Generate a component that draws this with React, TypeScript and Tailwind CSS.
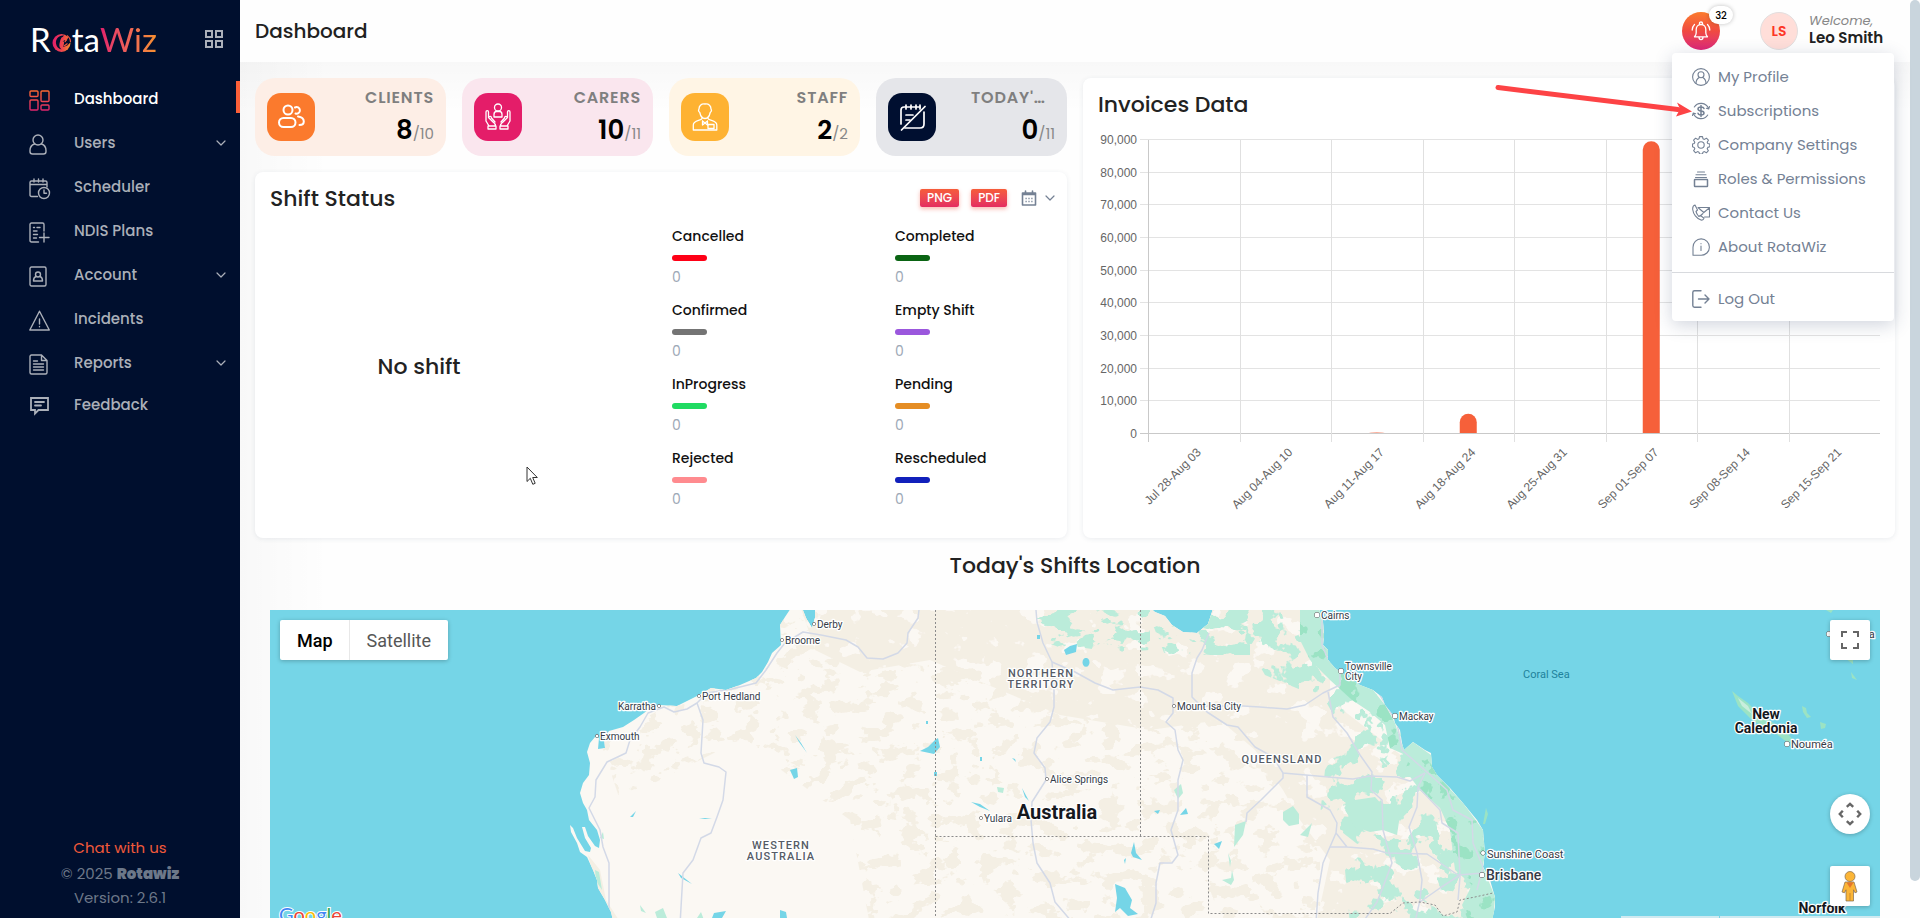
import type { ReactNode } from 'react'
import clsx from 'clsx'

interface IconProps {
  className?: string
  children?: ReactNode
  viewBox?: string
  width?: number
}

function Icon({ className, children, viewBox = '0 0 24 24', width = 1.6 }: IconProps) {
  return (
    <svg
      className={className}
      viewBox={viewBox}
      fill="none"
      stroke="currentColor"
      strokeWidth={width}
      strokeLinecap="round"
      strokeLinejoin="round"
      aria-hidden="true"
    >
      {children}
    </svg>
  )
}

function Chevron({ className }: { className?: string }) {
  return (
    <Icon className={className} viewBox="0 0 10 10" width={1.2}>
      <path d="M1 3l4 4 4-4" />
    </Icon>
  )
}

// Sidebar

interface NavItem {
  label: string
  icon: ReactNode
  expandable?: boolean
}

const NAV_ITEMS: NavItem[] = [
  {
    label: 'Dashboard',
    icon: (
      <g stroke="url(#brand)">
        <defs>
          <linearGradient id="brand" gradientUnits="userSpaceOnUse" x1="0" y1="0" x2="0" y2="21">
            <stop offset="0" stopColor="#fb6a2f" />
            <stop offset="1" stopColor="#e0246f" />
          </linearGradient>
        </defs>
        <rect x="1" y="1" width="8" height="5.5" rx="1" />
        <rect x="1" y="10" width="8" height="10" rx="1" />
        <rect x="12" y="1" width="8" height="10.5" rx="1" />
        <rect x="12" y="15" width="8" height="5" rx="1" />
      </g>
    ),
  },
  {
    label: 'Users',
    expandable: true,
    icon: (
      <>
        <circle cx="9" cy="6" r="5" />
        <path d="M5.5 10C2.500 11 1 13.500 1 16.500v1C1 19 2 20 3.500 20h11c1.500 0 2.500-1 2.500-2.500v-1c0-3-1.500-5.500-4.500-6.500" />
      </>
    ),
  },
  {
    label: 'Scheduler',
    icon: (
      <>
        <path d="M8.500 18.500H2.500c-.8 0-1.500-.6-1.500-1.500V4.500C1 3.600 1.600 3 2.500 3h14c.9 0 1.500.6 1.500 1.500V9M1 6.500h17" />
        <path d="M5 1v3M9.500 1v3M14 1v3" />
        <circle cx="15" cy="15" r="5.500" />
        <path d="M15 12v3.300h2.500" />
      </>
    ),
  },
  {
    label: 'NDIS Plans',
    icon: (
      <>
        <path d="M9.500 20H2.500C1.600 20 1 19.400 1 18.500v-16C1 1.600 1.600 1 2.500 1h11c.9 0 1.500.6 1.500 1.500V9" />
        <path d="M4.500 5.500h1M4.500 9h3.500M4.500 12.500h4M4.500 16h3M8 5.500h3M15 11v9M10.500 15.500H20" />
      </>
    ),
  },
  {
    label: 'Account',
    expandable: true,
    icon: (
      <>
        <rect x="1" y="1" width="16" height="19" rx="1.500" />
        <circle cx="9" cy="8.500" r="2.500" />
        <path d="M7 10.500c-2 .7-2.500 2-2.500 4.500h9c0-2.500-.5-3.800-2.500-4.500" />
      </>
    ),
  },
  {
    label: 'Incidents',
    icon: <path d="M10.500 1.200L20.300 20H.8zM10.500 9v5M10.500 16.500v.3" />,
  },
  {
    label: 'Reports',
    expandable: true,
    icon: (
      <>
        <path d="M12.500 1H2.500C1.600 1 1 1.600 1 2.500v16c0 .9.6 1.500 1.500 1.500h14c.9 0 1.500-.6 1.500-1.500V6.500zM12.500 1v5.500H18" />
        <path d="M4.500 7h4M4.500 10h10M4.500 13h10M4.500 16h10" />
      </>
    ),
  },
  {
    label: 'Feedback',
    icon: (
      <>
        <path d="M2 2h17v12H9.500L6 17.500V14H2z" strokeWidth="1.800" strokeLinejoin="miter" />
        <path d="M6 6h9M6 9.500h6" strokeWidth="1.800" />
      </>
    ),
  },
]

function Logo() {
  return (
    <a href="#home" className="flex items-center font-[Lato,sans-serif] text-[33px] leading-10 text-white">
      R
      <svg className="mt-2 h-5 w-[21px]" viewBox="0 0 20 20" aria-hidden="true">
        <defs>
          <linearGradient id="logo-ring" x1="0" y1="0.500" x2="1" y2="0.600">
            <stop offset="0" stopColor="#e31c6b" />
            <stop offset="0.600" stopColor="#ee4a4a" />
            <stop offset="1" stopColor="#f7902c" />
          </linearGradient>
        </defs>
        <circle cx="10" cy="10" r="9" fill="url(#logo-ring)" />
        <path d="M12.500 2.500C7 2 4 6 4.500 10.500c.5 3 2.500 5.500 5.500 6-2-2-2.500-3.500-2-6L9 6.500z" fill="#000f2e" />
        <path d="M11 8.500l1.800 0-1 5.500 4-1.500 4-4v-3L17 3.500 15 8l-1.500-1z" fill="#000f2e" />
        <circle cx="11" cy="5.500" r="1.300" fill="#ee3f55" />
        <path d="M12.500 13l3.500-2.500M13.500 9l2-4M15.500 2.500A8 8 0 0 1 19 9" stroke="#f0553f" strokeWidth="1.200" fill="none" />
      </svg>
      ta
      <span className="bg-linear-to-r from-[#e31c6b] to-[#f7902c] bg-clip-text text-transparent">Wiz</span>
    </a>
  )
}

function Sidebar() {
  return (
    <aside className="flex w-60 shrink-0 flex-col bg-[#000f2e] text-[#abb0b9]">
      <div className="flex h-[77px] items-center justify-between pr-4 pl-[30px]">
        <Logo />
        <button aria-label="Toggle sidebar">
          <Icon className="h-5 w-5" viewBox="0 0 20 20" width={2}>
            <path d="M2 2h6v6H2zM12 2h6v6h-6zM2 12h6v6H2zM12 12h6v6h-6z" strokeLinejoin="miter" />
          </Icon>
        </button>
      </div>

      <nav className="flex flex-col">
        {NAV_ITEMS.map((item, index) => (
          <a
            key={item.label}
            href="#nav"
            className={clsx(
              'relative flex items-center pr-3.5 pl-7 text-[15px] font-medium',
              index === NAV_ITEMS.length - 1 ? 'h-10' : 'h-11',
              index === 0 && 'text-white',
            )}
          >
            <Icon className="mt-0.5 h-[23px] w-[23px]" viewBox="-1 -1 23 23" width={1.4}>
              {item.icon}
            </Icon>
            <span className="ml-[23px] flex-1">{item.label}</span>
            {item.expandable && <Chevron className="h-2.5 w-2.5" />}
            {index === 0 && <span className="absolute top-1 right-0 h-8 w-1 bg-[#fb5f38]" />}
          </a>
        ))}
      </nav>

      <div className="mt-auto flex flex-col items-center pb-2 text-[15px] leading-6 text-[#6d7889]">
        <a href="#chat" className="mb-0.5 text-[#f1593a]">
          Chat with us
        </a>
        <p>
          © 2025 <b className="font-black">Rotawiz</b>
        </p>
        <p>Version: 2.6.1</p>
      </div>
    </aside>
  )
}

// Header

const MENU_ITEMS: { label: string; icon: ReactNode }[] = [
  {
    label: 'My Profile',
    icon: (
      <>
        <circle cx="9" cy="9" r="8.400" />
        <circle cx="9" cy="6.700" r="3" />
        <path d="M4 15.500c0-3.300 1.300-5 3.300-6M14 15.500c0-3.300-1.300-5-3.300-6" />
      </>
    ),
  },
  {
    label: 'Subscriptions',
    icon: (
      <>
        <path d="M2.300 5A8 8 0 0 1 16.500 6.500M15.700 13A8 8 0 0 1 1.500 11.500M17.500 4.500l-.800 2.500-2.300-.800M.5 13.500L1.300 11l2.300.800" />
        <path d="M12 6.500c-.3-1-1.300-1.500-3-1.500s-3 .700-3 2 1 1.800 3 2 3 .700 3 2-1.200 2-3 2-2.800-.700-3-1.800M9 3.500v11" strokeWidth="1.500" />
      </>
    ),
  },
  {
    label: 'Company Settings',
    icon: (
      <>
        <circle cx="9" cy="9" r="3.200" />
        <path d="M7.500.6h3l.5 2.200 1.400.6 2-1.200 2 2-1.200 2 .6 1.300 2 .5v2.800l-2 .6-.6 1.300 1.200 2-2 2.100-2-1.200-1.400.6-.5 1.800h-3L7 16.200l-1.400-.6-2 1.200-2-2.100 1.200-2-.6-1.300-1.700-.6V8l1.700-.5.600-1.300-1.200-2 2-2 2 1.200L7 2.800z" />
      </>
    ),
  },
  {
    label: 'Roles & Permissions',
    icon: (
      <>
        <path d="M5.500 2h7M4 4.800h10M3.500 7.500h11" />
        <rect x="2.500" y="9.500" width="13" height="7" rx="0.500" strokeWidth="1.500" />
      </>
    ),
  },
  {
    label: 'Contact Us',
    icon: (
      <>
        <path d="M6 3.500h11.500v9.500H12.500M6.500 4l5.300 4.500L17.200 4M8 12l3-2.500" />
        <path d="M3 1C1.200 1.500.5 3 .7 5.500c.5 4.500 3.800 9 8.300 10.500 1.500.4 2.500-.3 3-1.800L8.500 11.500l-1.700 1C5.500 11 4.500 9.500 4 7.500l1.500-1.500z" />
      </>
    ),
  },
  {
    label: 'About RotaWiz',
    icon: (
      <>
        <path d="M1 17.300v-8A8.200 8.200 0 1 1 9 17.300z" />
        <path d="M9 8v4.500M9 5.500v.3" />
      </>
    ),
  },
]

function ProfileMenu() {
  return (
    <div className="absolute top-[53px] right-4 z-20 w-[222px] rounded bg-white pt-[7px] pb-1 text-[15px] text-[#748194] shadow-[0_4px_18px_rgba(40,60,100,0.22)]">
      {MENU_ITEMS.map((item) => (
        <a key={item.label} href="#menu" className="flex h-[34px] items-center pl-5">
          <Icon className="h-[18px] w-[18px]" viewBox="0 0 18 18" width={1.1}>
            {item.icon}
          </Icon>
          <span className="ml-2">{item.label}</span>
        </a>
      ))}
      <hr className="mt-2 mb-2 border-[#d8dade]" />
      <button className="flex h-9 w-full items-center pl-5">
        <Icon className="h-[18px] w-[18px]" viewBox="0 0 18 18" width={1.4}>
          <path d="M9 .8H2.500C1.500.8.8 1.500.8 2.500v13c0 1 .7 1.700 1.700 1.700H9M6.500 9h10.500M13 5l4 4-4 4" />
        </Icon>
        <span className="ml-2">Log Out</span>
      </button>
      <svg className="absolute top-7 -left-[178px] h-10 w-52" viewBox="0 0 208 40" aria-hidden="true">
        <path d="M4 6.500L184 28.500" stroke="#fd4345" strokeWidth="5" strokeLinecap="round" />
        <path d="M198 30.500l-15-9 3 6.500-4 7.500z" fill="#fd4345" />
      </svg>
    </div>
  )
}

function Header() {
  return (
    <header className="relative flex h-[62px] shrink-0 items-center bg-[#fefefe] pr-[27px] pl-[15px]">
      <h1 className="text-[20px] font-medium text-[#212121]">Dashboard</h1>
      <button
        aria-label="Notifications, 32 unread"
        className="relative ml-auto flex h-[38px] w-[38px] items-center justify-center rounded-full bg-linear-to-b from-[#fb7a2c] via-[#f04a40] to-[#dd2477] text-white"
      >
        <Icon className="h-5 w-5" viewBox="0 0 20 20" width={1.3}>
          <path d="M3.500 15.800h13c-1.200-1.200-1.700-2.300-1.700-4V8.500c0-2.800-2-5-4.800-5s-4.800 2.200-4.800 5v3.300c0 1.700-.5 2.800-1.700 4zM8.500 3.500V2.200c0-1.600 3-1.600 3 0v1.300M8 16c0 3.500 4 3.500 4 0M3.500 3.500C2 5 1.200 6.800 1.200 9M16.500 3.500C18 5 18.800 6.800 18.800 9" />
        </Icon>
        <span className="absolute -top-1.5 left-[27px] flex h-[18px] w-6 items-center justify-center rounded-full bg-white text-[10px] font-medium text-black shadow-[0_0_4px_rgba(0,0,0,0.25)]">
          32
        </span>
      </button>
      <button className="ml-10 flex items-center gap-[11px] text-left">
        <span className="flex h-[38px] w-[38px] items-center justify-center rounded-full border border-[#e3dede] bg-[#ffded9] text-sm font-semibold text-[#fd3626]">
          LS
        </span>
        <span className="w-[74px] pb-1 leading-[17px] whitespace-nowrap">
          <i className="block text-[13px] text-[#888]">Welcome,</i>
          <b className="block text-[15px] font-semibold text-[#222]">Leo Smith</b>
        </span>
      </button>
      <ProfileMenu />
    </header>
  )
}

// Stat cards

interface Stat {
  label: string
  value: number
  total: number
  card: string
  tile: string
  icon: ReactNode
}

const STATS: Stat[] = [
  {
    label: 'CLIENTS',
    value: 8,
    total: 10,
    card: 'bg-[#fdeee6]',
    tile: 'bg-[#fb7a2d]',
    icon: (
      <g strokeWidth="2">
        <circle cx="11" cy="7" r="4.500" />
        <rect x="2" y="15" width="16.500" height="9" rx="4.500" />
        <path d="M18 4.500a3.300 3.300 0 1 1 .5 6M21 13.500c3.500.5 5.800 2.500 5.800 5 0 2-1.500 3.500-4.300 3.500" />
      </g>
    ),
  },
  {
    label: 'CARERS',
    value: 10,
    total: 11,
    card: 'bg-[#fae6ee]',
    tile: 'bg-[#e41d69]',
    icon: (
      <g strokeWidth="1.300">
        <circle cx="14" cy="4.500" r="3.500" />
        <path d="M10 14v-2.500c0-2 1-3 2.500-3h3c1.500 0 2.500 1 2.500 3V14z" />
        <path d="M4 26v-3h8v3zM5 23l-3-5V9c0-1.800 2.500-1.800 2.500 0v5.500l4.500 4.500c1.500 1 2.500 2 2.500 4M4.500 14.500c1-2 3-1 3 .5l3.500 4" />
        <path d="M24 26v-3h-8v3zM23 23l3-5V9c0-1.800-2.500-1.800-2.500 0v5.500L19 19c-1.500 1-2.500 2-2.500 4M23.500 14.500c-1-2-3-1-3 .5L17 19" />
      </g>
    ),
  },
  {
    label: 'STAFF',
    value: 2,
    total: 2,
    card: 'bg-[#fff5e5]',
    tile: 'bg-[#feb232]',
    icon: (
      <g strokeWidth="1.300">
        <path d="M14 1C10 .5 8 3 8 6c-.8 1.500 0 3 .8 3.500C9.500 13 11.500 15.500 14 15.500s4.500-2.500 5.200-6C20 9 20.800 7.500 20 6c0-3-2-5.500-6-5z" />
        <path d="M11 15.500C10 18 2.300 17 2.300 22v5h23.500v-5c0-5-7.800-4-8.800-6.500M11.500 18l2.500 2 2.500-2M11.500 18v4l2.500-2 2.500 2v-4" />
        <rect x="17" y="21.500" width="6" height="4" />
      </g>
    ),
  },
  {
    label: "TODAY'S SHIFTS",
    value: 0,
    total: 11,
    card: 'bg-[#e5e6ea]',
    tile: 'bg-[#000f30]',
    icon: (
      <g strokeWidth="1.700">
        <path d="M3 21V7c0-2 1-3 3-3h16M7 25h15c2.500 0 4-1.500 4-4V9" />
        <path d="M8 2v4M13 2v4M18 2v4M22 2v4M8 12h7M8 17h4" />
        <path d="M3.500 27L27 3.500" />
      </g>
    ),
  },
]

function StatCard({ stat }: { stat: Stat }) {
  return (
    <div className={clsx('flex h-[78px] items-center rounded-[20px] px-3', stat.card)}>
      <div className={clsx('flex h-12 w-12 shrink-0 items-center justify-center rounded-[14px] text-white', stat.tile)}>
        <Icon className="h-7 w-7" viewBox="0 0 28 28">
          {stat.icon}
        </Icon>
      </div>
      <div className="ml-auto w-[84px] self-start pt-1.5 text-right">
        <p className="truncate text-[16px] leading-7 font-semibold tracking-wider text-[#7f7f7f]">{stat.label}</p>
        <p className="text-[26px] leading-9 font-semibold text-black">
          {stat.value}
          <span className="text-[15px] font-normal text-[#888]">/{stat.total}</span>
        </p>
      </div>
    </div>
  )
}

// Shift status

const STATUSES = [
  { label: 'Cancelled', color: 'bg-[#fe0016]' },
  { label: 'Completed', color: 'bg-[#0a6413]' },
  { label: 'Confirmed', color: 'bg-[#747474]' },
  { label: 'Empty Shift', color: 'bg-[#9b57dd]' },
  { label: 'InProgress', color: 'bg-[#20db62]' },
  { label: 'Pending', color: 'bg-[#e58d24]' },
  { label: 'Rejected', color: 'bg-[#ff8b8f]' },
  { label: 'Rescheduled', color: 'bg-[#1120bb]' },
]

const exportButton =
  'h-[18px] rounded-xs bg-linear-to-b from-[#f65c39] to-[#e42c60] px-[7px] text-[12px] leading-[18px] font-medium text-white shadow-[0_2px_4px_rgba(240,80,60,0.4)]'

function ShiftStatus() {
  return (
    <section className="flex-1 rounded-lg bg-white pt-2 pr-3 pl-[15px] shadow-[0_1px_5px_rgba(60,80,110,0.1)]">
      <div className="flex h-9 items-center">
        <h2 className="text-[22px] font-medium text-[#222]">Shift Status</h2>
        <button className={clsx(exportButton, 'ml-auto')}>PNG</button>
        <button className={clsx(exportButton, 'ml-3')}>PDF</button>
        <button aria-label="Select period" className="ml-3.5 flex items-center gap-2 text-[#748194]">
          <Icon className="h-4 w-4" viewBox="0 0 16 16" width={1.6}>
            <path d="M1.500 3h13v12h-13zM1.500 4.500h13M4.500 1v2M11.500 1v2" />
            <path d="M4.500 8.500h7M4.500 11.500h7" strokeDasharray="1.200 1.700" strokeLinecap="butt" />
          </Icon>
          <Chevron className="h-2.5 w-2.5" />
        </button>
      </div>
      <div className="mt-2 grid grid-cols-[402fr_383fr]">
        <div className="relative flex items-center justify-center pr-[104px] text-[22px] font-medium text-[#222]">
          No shift
          <svg className="absolute top-[242px] left-64 h-5 w-3" viewBox="0 0 12 20" aria-hidden="true">
            <path
              d="M1 1v14.500l3.300-3.200 2.500 6 2.400-1-2.500-5.800H11.300z"
              fill="#fff"
              stroke="#333"
              strokeLinejoin="round"
            />
          </svg>
        </div>
        <dl className="grid grid-cols-[223fr_160fr] gap-y-[11px]">
          {STATUSES.map((status) => (
            <div key={status.label}>
              <dt className="text-[14px] leading-6 font-medium text-[#111]">{status.label}</dt>
              <dd>
                <span className={clsx('mt-[7px] mb-1.5 block h-1.5 w-[35px] rounded-full', status.color)} />
                <span className="block text-[14px] leading-5 text-[#9da8b6]">0</span>
              </dd>
            </div>
          ))}
        </dl>
      </div>
    </section>
  )
}

// Invoices chart

const INVOICES = [
  { week: 'Jul 28-Aug 03', amount: 0 },
  { week: 'Aug 04-Aug 10', amount: 0 },
  { week: 'Aug 11-Aug 17', amount: 150 },
  { week: 'Aug 18-Aug 24', amount: 5900 },
  { week: 'Aug 25-Aug 31', amount: 0 },
  { week: 'Sep 01-Sep 07', amount: 89300 },
  { week: 'Sep 08-Sep 14', amount: 0 },
  { week: 'Sep 15-Sep 21', amount: 0 },
]

const CHART = { left: 50, right: 782, top: 10, bottom: 304 }

function InvoicesChart() {
  const step = (CHART.right - CHART.left) / INVOICES.length
  const scale = (CHART.bottom - CHART.top) / 90000

  return (
    <svg viewBox="0 0 782 390" className="w-full font-['Liberation_Sans',Arial,sans-serif] text-[12px]">
      {Array.from({ length: 10 }, (_, i) => {
        const y = Math.round(CHART.bottom - i * 10000 * scale) - 0.5
        return (
          <g key={i}>
            <path d={`M${CHART.left - 8} ${y}H${CHART.right}`} stroke={i === 0 ? '#c9c9c9' : '#e3e3e3'} />
            <text x={CHART.left - 11} y={y + 4} textAnchor="end" fill="#666">
              {(i * 10000).toLocaleString('en-US')}
            </text>
          </g>
        )
      })}
      {INVOICES.map((invoice, i) => {
        const x = Math.round(CHART.left + i * step) + 0.5
        const middle = CHART.left + (i + 0.5) * step
        const height = invoice.amount * scale
        const top = CHART.bottom - height
        const radius = Math.min(8.5, height)
        return (
          <g key={invoice.week}>
            <path d={`M${x} ${CHART.top}V${CHART.bottom + 8}`} stroke={i === 0 ? '#c9c9c9' : '#e0e0e0'} />
            {height > 0 && (
              <path
                d={`M${middle - 8.5} ${CHART.bottom - 1}V${top + radius - 1}a8.5 ${radius} 0 0 1 17 0V${CHART.bottom - 1}z`}
                fill="#f6603a"
              />
            )}
            <text
              transform={`translate(${middle + 8} ${CHART.bottom + 19}) rotate(-45)`}
              textAnchor="end"
              fill="#666"
            >
              {invoice.week}
            </text>
          </g>
        )
      })}
    </svg>
  )
}

// Shifts map

const LAND =
  'M793 605L785 617 780 625 781 645 772 653 768 662 762 672 756 678 740 685 726 690 711 688 699 695 685 702 677 706 660 705 652 707 644 713 634 720 623 727 609 731 604 738 605 748 598 749 599 738 595 737 590 743 587 752 590 763 589 775 583 783 580 793 583 803 587 810 589 820 597 830 600 840 599 848 595 846 588 836 585 827 582 827 585 838 591 848 590 852 585 851 577 838 573 828 570 825 571 832 577 843 580 852 587 857 593 870 597 880 598 888 605 900 611 912 614 925 1491 925 1495 907 1495 897 1490 880 1483 867 1485 853 1483 830 1477 820 1463 803 1450 788 1437 775 1432 767 1431 753 1425 750 1413 742 1404 750 1402 743 1400 730 1395 723 1393 715 1385 705 1382 697 1373 690 1360 685 1347 677 1335 668 1328 660 1328 650 1323 645 1324 635 1323 622 1318 605 1214 605 1212 612 1208 624 1197 633 1183 632 1172 625 1165 616 1155 612 1147 605 815 605 815 618 812 628 806 618 801 605z'

const TROPICS =
  'M800 605H1330V700L1420 770 1480 840 1495 925H1316L1330 860 1300 820 1283 790 1255 750 1220 720 1150 730 1060 715 1000 690 930 660 860 672 815 650z'

const GREEN_BELT =
  'M1300 605L1318 605 1323 622 1324 645 1328 660 1347 677 1373 690 1385 705 1395 723 1402 745 1413 742 1431 755 1437 775 1463 803 1483 830 1485 853 1483 867 1495 897 1493 925 1470 925 1462 905 1472 885 1455 870 1450 830 1440 808 1420 790 1405 770 1410 757 1390 748 1385 725 1370 712 1352 700 1330 680 1310 660 1300 640z'

const WOODLAND =
  'M1250 605H1325L1345 680 1400 730 1480 830 1494 925H1350L1345 870 1365 850 1320 815 1325 770 1345 735 1325 700 1265 675 1245 640z'

const ROADS = [
  'M919 610L918 618 908 633 907 643 898 653 883 659 867 658 858 647 846 640 821 635 803 632 785 643 777 653 766 670 756 683 732 689 707 693 697 703 687 709 674 712 664 707 648 713 640 727 630 740 626 753 607 762 596 780 595 797 589 808 600 830 603 847 609 863 609 925',
  'M697 703L703 720 701 753 704 763 719 767 726 772 723 800 717 817 711 833 701 838 693 860 683 873 680 925',
  'M1036 610L1037 622 1043 643 1052 662 1054 690 1054 707 1050 722 1037 738 1034 753 1045 768 1046 780 1032 802 1031 820 1033 843 1037 863 1050 883 1055 902 1072 922',
  'M1052 662L1075 672 1095 683 1113 690 1140 687 1158 690 1173 698 1173 713 1166 722 1175 730 1178 750 1183 760 1178 780 1178 810 1171 830 1178 855 1172 863 1160 863 1156 883 1156 903 1150 922',
  'M1209 633L1202 650 1197 658 1192 673 1192 697 1207 712 1227 725 1238 727 1255 747 1273 757 1283 773 1340 778 1353 779 1370 776 1397 777 1410 781 1425 773',
  'M1173 706L1243 706 1260 707 1287 709 1305 705 1323 693 1340 685 1340 672',
  'M1283 773L1283 778 1261 800 1247 813 1246 822',
  'M1328 692L1333 717 1347 733 1360 755 1372 772 1371 790 1382 800 1383 830 1392 863 1383 887 1377 902 1363 922',
  'M1307 775L1307 797 1330 810 1337 823 1336 833 1323 863 1318 893 1316 922',
  'M1330 847L1347 847 1373 849 1387 853 1427 854 1458 875 1483 873M1336 833L1347 847',
  'M1322 615L1322 645 1327 657 1340 672 1377 690 1397 723 1402 750 1427 772 1447 790 1453 810 1472 820 1473 843 1483 867 1477 890',
  'M1425 773L1418 787 1417 807 1409 827 1417 853 1422 880 1420 900 1415 922',
  'M1418 787L1440 810 1442 823 1458 833 1460 877 1458 900M1460 875L1440 888 1420 902',
]

const LAKES = [
  'M935 740L938 738 940 747 934 754 920 751 928 747z',
  'M1115 884L1125 888 1132 900 1130 908 1138 914 1128 916 1120 908 1115 912 1117 898z',
  'M1064 650L1070 646 1077 644 1076 652 1066 655z',
  'M1085 658a3.500 4.500 0 1 0 2 0z',
  'M1214 844L1222 841 1219 849z',
  'M790 770L797 768 798 777 794 779z',
  'M971 802L980 804 990 811 980 807zM959 796L963 798z',
  'M1022 788L1025 797 1029 801zM1090 764L1099 769zM1066 827L1071 832z',
  'M1134 842L1136 853 1142 860 1133 857 1131 853zM1124 860L1126 858 1125 864z',
  'M678 873L692 884 681 878zM714 913L726 911 722 918H712zM780 910L786 912 787 918H780z',
  'M795 735L801 743 807 753 799 742zM630 817L636 811 633 817zM699 818H712L705 819z',
  'M1037 635h3v4h-3zM934 772h3v4h-3zM980 757h2v4h-2zM1012 758l3 1 1 3zM926 721h2v3h-2z',
  'M1180 815L1186 808 1188 814zM1154 811l6-1-2 4z',
]

const PARKS = [
  'M1174 790L1181 784 1183 793 1178 799z',
  'M997 787l7 1-1 5-5-1z',
  'M1235 825L1246 821 1243 835 1234 847zM1228 853l3 8-1 6zM1222 880l9-2 1-8 2 10-3 5z',
  'M1345 810L1355 800 1375 797 1385 808 1400 815 1397 835 1383 830 1370 832 1355 827z',
  'M1283 812l10-6 6 8v10l-10 2-6-6zM1300 835l12-12-4 14z',
  'M595 870l4 2 3 18-6-9zM600 838l3-6 1 7zM640 905l6 8-5-2z',
  'M655 912l8-4 4 10h-10zM697 918l4-6 3 8zM1083 643l8-1 1 7-7-1z',
]

interface MapLabel {
  text: string
  x: number
  y: number
  end?: boolean
  large?: boolean
  dot?: [number, number, number]
}

const TOWNS: MapLabel[] = [
  { text: 'Derby', x: 817, y: 628, dot: [814, 624, 1.5] },
  { text: 'Broome', x: 785, y: 644, dot: [782, 640, 1.5] },
  { text: 'Port Hedland', x: 702, y: 700, dot: [699, 696, 1.5] },
  { text: 'Karratha', x: 656, y: 710, end: true, dot: [659, 706, 1.5] },
  { text: 'Exmouth', x: 600, y: 740, dot: [597, 736, 1.5] },
  { text: 'Alice Springs', x: 1050, y: 783, dot: [1047, 779, 1.5] },
  { text: 'Yulara', x: 984, y: 822, dot: [981, 818, 1.5] },
  { text: 'Mount Isa City', x: 1177, y: 710, dot: [1174, 706, 1.5] },
  { text: 'Cairns', x: 1321, y: 619, dot: [1317, 615, 2.5] },
  { text: 'Townsville', x: 1345, y: 670, dot: [1341, 671, 2.5] },
  { text: 'City', x: 1345, y: 680 },
  { text: 'Mackay', x: 1399, y: 720, dot: [1395, 716, 2.5] },
  { text: 'Sunshine Coast', x: 1487, y: 858, large: true, dot: [1483, 853, 2] },
  { text: 'Nouméa', x: 1791, y: 748, large: true, dot: [1787, 744, 2.5] },
  { text: 'Port Vila', x: 1833, y: 638, large: true, dot: [1829, 634, 2.5] },
]

function Speckle({ id, seed, freq, color, cut }: { id: string; seed: number; freq: string; color: string; cut: number }) {
  return (
    <filter id={id} x="0" y="0" width="1" height="1" colorInterpolationFilters="sRGB">
      <feTurbulence type="fractalNoise" baseFrequency={freq} numOctaves={4} seed={seed} />
      <feColorMatrix values={`0 0 0 0 0  0 0 0 0 0  0 0 0 0 0  0 0 0 30 ${-30 * cut}`} result="spots" />
      <feFlood floodColor={color} />
      <feComposite operator="in" in2="spots" />
      <feComposite operator="in" in2="SourceAlpha" />
    </filter>
  )
}

function MapCanvas() {
  return (
    <svg viewBox="270 610 1610 308" className="block w-full bg-[#75d5e7] font-[Roboto,sans-serif] text-[10px]">
      <defs>
        <clipPath id="land">
          <path d={LAND} />
        </clipPath>
        <Speckle id="sand" seed={7} freq="0.05 0.07" color="#f4efe4" cut={0.56} />
        <Speckle id="pale" seed={3} freq="0.04 0.05" color="#fbf8f3" cut={0.6} />
        <Speckle id="bush" seed={12} freq="0.05 0.045" color="#bbecda" cut={0.52} />
        <Speckle id="forest" seed={5} freq="0.05" color="#9be3c4" cut={0.58} />
        <Speckle id="north" seed={21} freq="0.04 0.07" color="#bbecda" cut={0.55} />
      </defs>

      <g clipPath="url(#land)">
        <rect x="560" y="605" width="950" height="320" fill="#fbf8f3" />
        <path d="M780 605H1320V925H870L850 820 740 740 620 800 600 740 700 690z" filter="url(#sand)" />
        <path d={TROPICS} fill="#f4efe4" />
        <path d={TROPICS} filter="url(#pale)" />
        <path d="M1030 605H1150V650L1080 655 1040 640z" filter="url(#north)" />
        <path d="M1145 605H1250V655H1165z" filter="url(#north)" />
        <path d={WOODLAND} filter="url(#bush)" />
        <path d={GREEN_BELT} fill="#bbecda" />
        <path d={GREEN_BELT} filter="url(#forest)" />
        <path d="M588 855L600 870 606 900 622 925H605z" fill="#f4efe4" />
        {PARKS.map((d) => (
          <path key={d} d={d} fill="#bbecda" />
        ))}
        {LAKES.map((d) => (
          <path key={d} d={d} fill="#75d5e7" />
        ))}
        <g fill="none" stroke="#d3d9e7" strokeWidth="1.500" strokeLinejoin="round">
          {ROADS.map((d) => (
            <path key={d} d={d} />
          ))}
        </g>
        <path
          d="M935.500 610V925M1140.500 610V836.500M935.500 836.500H1208.500V913.500H1390L1403 903 1420 902 1435 905 1443 916 1457 912 1460 900 1475 897 1493 893"
          fill="none"
          stroke="#8b8b8b"
          strokeDasharray="2 2"
        />
      </g>

      {/* Islands */}
      <g fill="#9be3c4">
        <path d="M1732 691L1738 696 1748 703 1760 715 1785 730 1793 740 1788 743 1775 733 1752 720 1738 706z" />
        <path d="M1802 706l4 2 1 5 4 4-4 1-4-6zM1820 722l6 2-1 4-4 1zM1851 672l6 8-5-2zM1826 610h7l-2 3z" />
        <path d="M1846 659l7 1v4zM1483 824l3-16 2 6-3 10z" />
      </g>
      <path d="M1738 698l10 8 4 8-10-8z" fill="#c9eedd" />

      <g fill="#343b47" stroke="#fff" strokeWidth="2.500" strokeLinejoin="round" paintOrder="stroke">
        {TOWNS.map((town) => (
          <g key={town.text}>
            {town.dot && (
              <circle cx={town.dot[0]} cy={town.dot[1]} r={town.dot[2]} fill="#fff" stroke="#444" strokeWidth="1" />
            )}
            <text
              x={town.x}
              y={town.y}
              textAnchor={town.end ? 'end' : 'start'}
              className={town.large ? 'text-[11px]' : undefined}
            >
              {town.text}
            </text>
          </g>
        ))}
        <circle cx="1482" cy="875" r="2.500" fill="#fff" stroke="#333" strokeWidth="1" />
        <g className="text-[14px] font-medium">
          <text x="1486" y="880">
            Brisbane
          </text>
        </g>
        <g className="text-[11px] font-medium tracking-widest" fill="#555b66" textAnchor="middle">
          <text x="1041" y="677">
            NORTHERN
          </text>
          <text x="1041" y="688">
            TERRITORY
          </text>
          <text x="781" y="849">
            WESTERN
          </text>
          <text x="781" y="860">
            AUSTRALIA
          </text>
          <text x="1282" y="763">
            QUEENSLAND
          </text>
        </g>
        <g className="text-[14px] font-bold" fill="#15181e" textAnchor="middle">
          <text x="1766" y="719">
            New
          </text>
          <text x="1766" y="733">
            Caledonia
          </text>
          <text x="1822" y="913">
            Norfolk
          </text>
          <text x="1057" y="819" className="text-[20px]">
            Australia
          </text>
        </g>
      </g>
      <text x="1523" y="678" fill="#1e829b" className="text-[11px]">
        Coral Sea
      </text>

      <g className="font-[Lato,sans-serif] text-[20px]" stroke="#fff" strokeWidth="2" paintOrder="stroke">
        <text x="279" y="922">
          <tspan fill="#4285f4">G</tspan>
          <tspan fill="#ea4335">o</tspan>
          <tspan fill="#fbbc04">o</tspan>
          <tspan fill="#4285f4">g</tspan>
          <tspan fill="#34a853">l</tspan>
          <tspan fill="#ea4335">e</tspan>
        </text>
      </g>
      <path d="M1621 916h98v2h-98zM1720 916h160v2h-160z" fill="#cfeaf1" />
    </svg>
  )
}

const mapButton = 'absolute right-2.5 flex h-10 w-10 items-center justify-center bg-white shadow-[0_1px_4px_rgba(0,0,0,0.25)]'

function ShiftsMap() {
  return (
    <section className="min-h-0 flex-1 overflow-hidden px-[15px]">
      <h2 className="pt-3 text-center text-[22px] leading-8 font-medium text-[#222]">Today's Shifts Location</h2>
      <div className="relative mt-7">
        <MapCanvas />
        <div className="absolute top-2.5 left-2.5 flex h-10 rounded-xs bg-white font-[Roboto,sans-serif] text-[18px] shadow-[0_1px_4px_rgba(0,0,0,0.25)]">
          <button className="border-r border-[#e8e8e8] pr-4 pl-[17px] font-medium text-black">Map</button>
          <button className="px-[17px] text-[#565656]">Satellite</button>
        </div>
        <button aria-label="Toggle fullscreen view" className={clsx(mapButton, 'top-2.5 rounded-xs')}>
          <svg className="h-[18px] w-[18px]" viewBox="0 0 18 18" fill="#666">
            <path d="M0 0v6h2V2h4V0zM12 0v2h4v4h2V0zM16 16h-4v2h6v-6h-2zM2 12H0v6h6v-2H2z" />
          </svg>
        </button>
        <button aria-label="Map camera controls" className={clsx(mapButton, 'top-[184px] rounded-full')}>
          <svg className="h-6 w-6" viewBox="0 0 24 24" fill="none" stroke="#666" strokeWidth="2.400">
            <path d="M8.800 4.800L12 1.800 15.200 4.800M8.800 19.200l3.200 3 3.200-3M4.800 8.800L1.800 12 4.800 15.200M19.200 8.800l3 3.200L19.200 15.200" />
          </svg>
        </button>
        <button aria-label="Street View" className={clsx(mapButton, 'top-[256px] rounded-xs')}>
          <svg className="h-8 w-5" viewBox="0 0 20 32">
            <path
              d="M5 12h9l3 10-2 .8-1.500-3V31H6V19.800l-1.500 3L2 22z"
              fill="#fbb537"
              stroke="#7f6a52"
              strokeWidth="0.700"
            />
            <path d="M6.500 12.500h7L10 18z" fill="#e5762c" />
            <path d="M10 23v8" stroke="#c9892c" />
            <circle cx="10" cy="6.500" r="5" fill="#fbb537" stroke="#7f6a52" strokeWidth="0.700" />
          </svg>
        </button>
      </div>
    </section>
  )
}

export default function App() {
  return (
    <div className="flex h-screen overflow-hidden bg-white font-[Poppins,Inter,sans-serif]">
      <Sidebar />
      <div className="flex min-w-0 flex-1 flex-col">
        <Header />
        <main className="flex min-h-0 flex-1 flex-col bg-[linear-gradient(to_bottom,rgba(0,0,0,0.025),transparent_50px),linear-gradient(to_right,rgba(0,0,0,0.025),transparent_90px)] bg-[#fefefe] px-[15px] pt-4">
          <div className="grid grid-cols-2 gap-4">
            <div className="flex flex-col gap-4">
              <div className="grid grid-cols-4 gap-4">
                {STATS.map((stat) => (
                  <StatCard key={stat.label} stat={stat} />
                ))}
              </div>
              <ShiftStatus />
            </div>
            <section className="rounded-lg bg-white px-[15px] pt-2 shadow-[0_1px_5px_rgba(60,80,110,0.1)]">
              <h2 className="text-[22px] leading-[38px] font-medium text-[#222]">Invoices Data</h2>
              <div className="mt-1.5 pb-[18px]">
                <InvoicesChart />
              </div>
            </section>
          </div>
          <ShiftsMap />
        </main>
      </div>
      <div className="w-2.5 shrink-0 bg-white">
        <div className="h-[96%] rounded-full bg-[#c9d5dd]" />
      </div>
    </div>
  )
}
